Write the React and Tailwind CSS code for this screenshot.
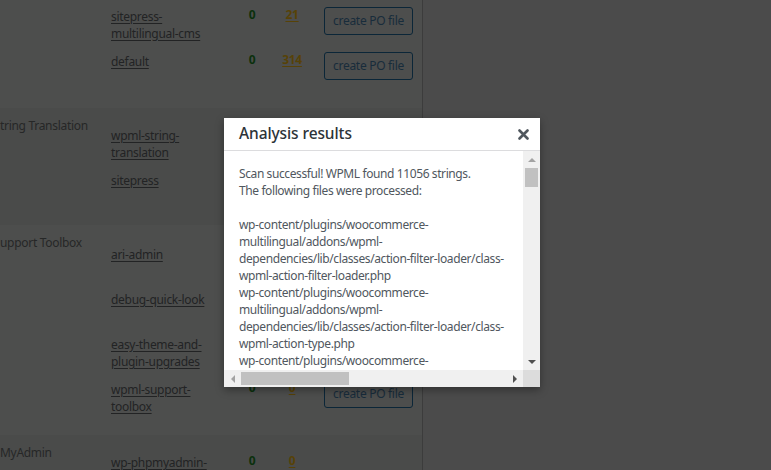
import React from 'react'

const rows = [
  {
    name: '',
    bg: 'bg-[#4d4e4d]',
    pt: 'pt-0',
    pb: 'pb-[18px]',
    items: [
      { link: ['sitepress-', 'multilingual-cms'], ok: '0', todo: '21' },
      { link: ['default'], ok: '0', todo: '314' },
    ],
  },
  {
    name: 'tring Translation',
    bg: 'bg-[#4a4b4a]',
    pt: 'pt-[11px]',
    pb: 'pb-[16px]',
    items: [
      { link: ['wpml-string-', 'translation'], ok: '0', todo: '0' },
      { link: ['sitepress'], ok: '0', todo: '0' },
    ],
  },
  {
    name: 'upport Toolbox',
    bg: 'bg-[#4d4e4d]',
    pt: 'pt-[13px]',
    pb: 'pb-[17px]',
    items: [
      { link: ['ari-admin'], ok: '0', todo: '0' },
      { link: ['debug-quick-look'], ok: '0', todo: '0' },
      { link: ['easy-theme-and-', 'plugin-upgrades'], ok: '0', todo: '0' },
      { link: ['wpml-support-', 'toolbox'], ok: '0', todo: '0' },
    ],
  },
  {
    name: 'MyAdmin',
    bg: 'bg-[#4a4b4a]',
    pt: 'pt-[11px]',
    pb: 'pb-[16px]',
    items: [{ link: ['wp-phpmyadmin-', 'extension'], ok: '0', todo: '0', noButton: true }],
  },
]

const fileLines = [
  'Scan successful! WPML found 11056 strings.',
  'The following files were processed:',
  '',
  'wp-content/plugins/woocommerce-',
  'multilingual/addons/wpml-',
  'dependencies/lib/classes/action-filter-loader/class-',
  'wpml-action-filter-loader.php',
  'wp-content/plugins/woocommerce-',
  'multilingual/addons/wpml-',
  'dependencies/lib/classes/action-filter-loader/class-',
  'wpml-action-type.php',
  'wp-content/plugins/woocommerce-',
  'multilingual/addons/wpml-',
  'dependencies/lib/classes/action-filter-loader/class-',
]

function Item({ item }) {
  return (
    <div className="flex h-[45px] items-start">
      <div className="w-[128px] pt-[8px] leading-[17px] text-[#222324]">
        {item.link.map((l, i) => (
          <div key={i} className="whitespace-nowrap">
            <span className="underline underline-offset-2">{l}</span>
          </div>
        ))}
      </div>
      <div className="w-[26px] pt-[6px] text-center font-bold text-[#0b300c]">{item.ok}</div>
      <div className="w-[54px] pt-[6px] text-center font-bold text-[#574207] underline underline-offset-2">
        {item.todo}
      </div>
      {!item.noButton && (
        <button className="mt-[7px] ml-[5px] h-[28px] w-[89px] rounded-[3px] border border-[#0b2638] text-[12px] text-[#182c3b]">
          create PO file
        </button>
      )}
    </div>
  )
}

function Row({ row }) {
  return (
    <div className={`flex ${row.bg}`}>
      <div className="w-[111px] pt-[9px] leading-[17px] whitespace-nowrap text-[#262727]">{row.name}</div>
      <div className={`${row.pt} ${row.pb}`}>
        {row.items.map((it, i) => (
          <Item key={i} item={it} />
        ))}
      </div>
    </div>
  )
}

function Tri({ dir, color }) {
  const pts = {
    up: '0,4 4,0 8,4',
    down: '0,0 8,0 4,4',
    left: '4,0 4,8 0,4',
    right: '0,0 0,8 4,4',
  }[dir]
  const w = dir === 'up' || dir === 'down' ? 8 : 4
  const h = dir === 'up' || dir === 'down' ? 4 : 8
  return (
    <svg width={w} height={h} viewBox={`0 0 ${w} ${h}`}>
      <polygon points={pts} fill={color} />
    </svg>
  )
}

export default function App() {
  return (
    <div className="relative flex h-[470px] w-[771px] overflow-hidden bg-[#4b4b4b] font-['Noto_Sans',sans-serif] text-[12px] tracking-[-0.3px]">
      <div className="flex w-[423px] flex-col border-r border-[#3c3c3c]">
        {rows.map((r, i) => (
          <Row key={i} row={r} />
        ))}
      </div>
      <div className="flex-1" />

      <div className="absolute left-[224px] top-[118px] flex h-[269px] w-[316px] flex-col bg-white shadow-[0_3px_8px_rgba(0,0,0,0.35)]">
        <div className="flex h-[33px] items-center justify-between border-b border-[#dcdcde] pl-[15px] pr-[11px]">
          <h1 className="text-[15.5px] font-medium tracking-[-0.1px] text-[#2c3338]">Analysis results</h1>
          <svg width="11" height="11" viewBox="0 0 11 11" className="mt-[1px]">
            <path d="M1.5 1.5 9.5 9.5M9.5 1.5 1.5 9.5" stroke="#50575e" strokeWidth="2.6" strokeLinecap="round" />
          </svg>
        </div>
        <div className="flex min-h-0 flex-1">
          <div className="min-w-0 flex-1 overflow-hidden pl-[15px] pt-[14px] leading-[17px] tracking-[-0.4px] text-[#50575e]">
            {fileLines.map((l, i) => (
              <div key={i} className="h-[17px] whitespace-nowrap">
                {l}
              </div>
            ))}
          </div>
          <div className="flex w-[17px] flex-col items-center bg-[#f0f0f0]">
            <div className="flex h-[17px] items-center justify-center">
              <Tri dir="up" color="#a3a3a3" />
            </div>
            <div className="h-[19px] w-[13px] bg-[#c1c1c1]" />
            <div className="flex-1" />
            <div className="flex h-[17px] items-center justify-center">
              <Tri dir="down" color="#505050" />
            </div>
          </div>
        </div>
        <div className="flex h-[17px]">
          <div className="flex flex-1 items-center bg-[#f0f0f0]">
            <div className="flex w-[17px] justify-center">
              <Tri dir="left" color="#a3a3a3" />
            </div>
            <div className="h-[13px] w-[108px] bg-[#c1c1c1]" />
            <div className="flex-1" />
            <div className="flex w-[17px] justify-center">
              <Tri dir="right" color="#505050" />
            </div>
          </div>
          <div className="w-[17px] bg-[#dcdcdc]" />
        </div>
      </div>
    </div>
  )
}
